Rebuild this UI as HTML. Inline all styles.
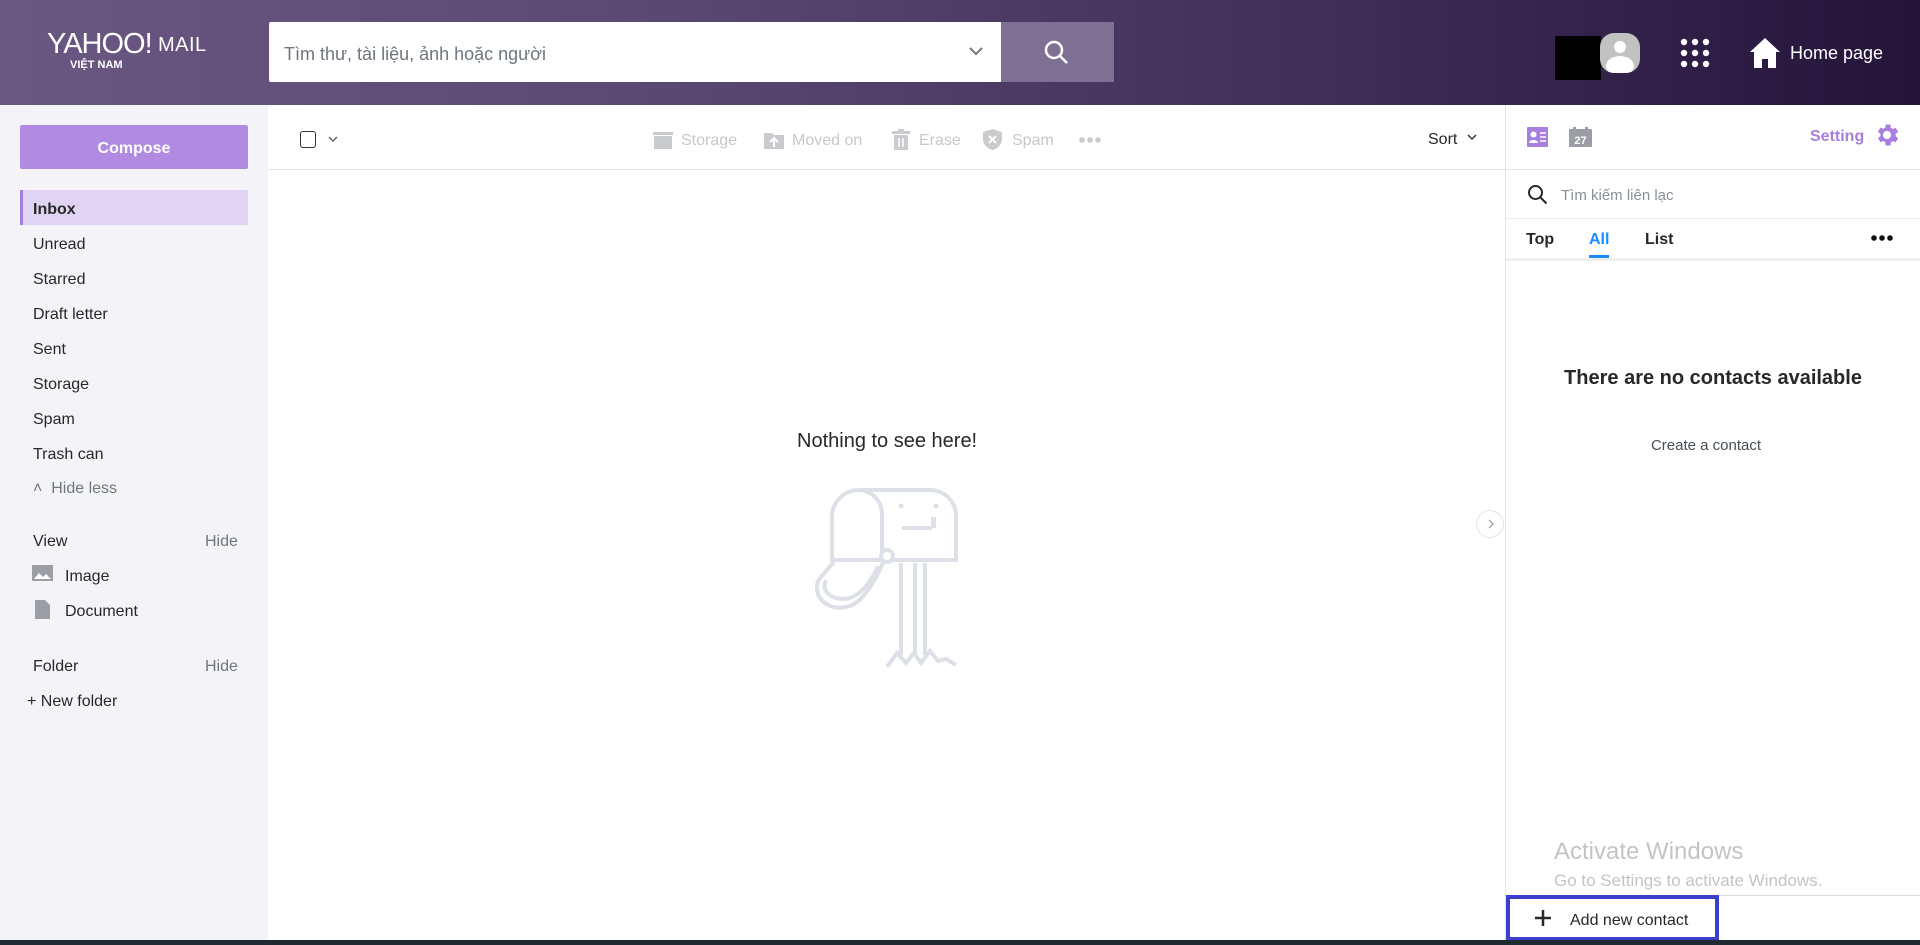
<!DOCTYPE html>
<html><head><meta charset="utf-8"><style>
*{margin:0;padding:0;box-sizing:border-box}
body{width:1920px;height:945px;overflow:hidden;font-family:"Liberation Sans","DejaVu Sans",sans-serif;color:#26282a;background:#fff;position:relative}
.a{position:absolute}
#hdr{left:0;top:0;width:1920px;height:105px;background:linear-gradient(90deg,#6a5882 0%,#5a4872 35%,#3f2d58 70%,#24143a 100%)}
#side{left:0;top:105px;width:268px;height:835px;background:#f4f4f8}
.nav{position:absolute;left:33px;font-size:16px;color:#26282a}
.tb{position:absolute;top:132px;font-size:16px;color:#c6c8cc}
</style></head><body>
<div id="hdr" class="a"></div>
<div class="a" style="left:47px;top:28px;color:#fff;font-size:29px;letter-spacing:-1px;font-weight:300">YAHOO!</div>
<div class="a" style="left:158px;top:34px;color:#fff;font-size:20px;letter-spacing:.5px">MAIL</div>
<div class="a" style="left:70px;top:59px;color:#fff;font-size:11px;font-weight:bold">VIỆT NAM</div>
<div class="a" style="left:269px;top:22px;width:733px;height:60px;background:#fff;border-radius:2px 0 0 2px"></div>
<div class="a" style="left:284px;top:44px;font-size:18px;color:#6e7680">Tìm thư, tài liệu, ảnh hoặc người</div>
<svg class="a" style="left:967px;top:44px" width="18" height="14"><path d="M3 4l6 6 6-6" stroke="#777" stroke-width="2" fill="none"/></svg>
<div class="a" style="left:1001px;top:22px;width:113px;height:60px;background:#7e7093"></div>
<svg class="a" style="left:1043px;top:39px" width="28" height="28"><circle cx="11" cy="11" r="8" stroke="#fff" stroke-width="2.5" fill="none"/><path d="M17 17l7 7" stroke="#fff" stroke-width="2.5"/></svg>
<div class="a" style="left:1555px;top:36px;width:46px;height:44px;background:#000"></div>
<div class="a" style="left:1600px;top:33px;width:40px;height:40px;border-radius:14px;background:#c2c2c2;overflow:hidden"><div class="a" style="left:14px;top:8px;width:12px;height:12px;border-radius:50%;background:#fff"></div><div class="a" style="left:6px;top:23px;width:28px;height:20px;border-radius:50%;background:#fff"></div></div>
<svg class="a" style="left:1680px;top:38px" width="32" height="32"><g fill="#fff"><circle cx="4" cy="4" r="3.2"/><circle cx="15" cy="4" r="3.2"/><circle cx="26" cy="4" r="3.2"/><circle cx="4" cy="15" r="3.2"/><circle cx="15" cy="15" r="3.2"/><circle cx="26" cy="15" r="3.2"/><circle cx="4" cy="26" r="3.2"/><circle cx="26" cy="26" r="3.2"/><circle cx="15" cy="26" r="3.2"/></g></svg>
<svg class="a" style="left:1749px;top:37px" width="32" height="32"><path d="M16 1L1 15h4v16h8v-9h6v9h8V15h4z" fill="#fff"/></svg>
<div class="a" style="left:1790px;top:43px;font-size:18px;color:#fff">Home page</div>

<div id="side" class="a"></div>
<div class="a" style="left:20px;top:125px;width:228px;height:44px;background:#b18be2;border-radius:2px;color:#fff;font-weight:bold;font-size:16px;text-align:center;line-height:48px">Compose</div>
<div class="a" style="left:20px;top:190px;width:228px;height:35px;background:#e1d4f3;border-left:3px solid #a57fdc"></div>
<div class="nav" style="top:201px;font-weight:bold">Inbox</div>
<div class="nav" style="top:236px">Unread</div>
<div class="nav" style="top:271px">Starred</div>
<div class="nav" style="top:306px">Draft letter</div>
<div class="nav" style="top:341px">Sent</div>
<div class="nav" style="top:376px">Storage</div>
<div class="nav" style="top:411px">Spam</div>
<div class="nav" style="top:446px">Trash can</div>
<div class="nav" style="top:480px;color:#6e7680;left:33px">˄&nbsp;&nbsp;Hide less</div>
<div class="nav" style="top:533px">View</div><div class="nav" style="top:533px;left:205px;color:#6e7680">Hide</div>
<svg class="a" style="left:32px;top:565px" width="21" height="16"><rect width="21" height="16" fill="#9c9ea6"/><path d="M2 14l5-6 4 4 3-3 5 5z" fill="#fff"/></svg>
<div class="nav" style="top:568px;left:65px">Image</div>
<svg class="a" style="left:35px;top:600px" width="15" height="19"><path d="M0 0h10l5 5v14H0z" fill="#9c9ea6"/></svg>
<div class="nav" style="top:603px;left:65px">Document</div>
<div class="nav" style="top:658px">Folder</div><div class="nav" style="top:658px;left:205px;color:#6e7680">Hide</div>
<div class="nav" style="top:693px;left:27px">+ New folder</div>

<div class="a" style="left:268px;top:169px;width:1237px;height:1px;background:#e4e4e8"></div>
<div class="a" style="left:300px;top:131px;width:16px;height:17px;border:1.5px solid #333;border-radius:3px"></div>
<svg class="a" style="left:327px;top:134px" width="12" height="10"><path d="M2 3l4 4 4-4" stroke="#666" stroke-width="1.5" fill="none"/></svg>
<svg class="a" style="left:653px;top:130px" width="20" height="20"><rect x="0" y="2" width="20" height="3" fill="#c9cbcf"/><rect x="1" y="6" width="18" height="13" fill="#c9cbcf"/></svg>
<div class="tb" style="left:681px">Storage</div>
<svg class="a" style="left:764px;top:130px" width="20" height="20"><path d="M0 3h8l2 2h10v14H0z" fill="#c9cbcf"/><path d="M10 17V9M6 12l4-4 4 4" stroke="#fff" stroke-width="2" fill="none"/></svg>
<div class="tb" style="left:792px">Moved on</div>
<svg class="a" style="left:892px;top:129px" width="18" height="21"><rect x="0" y="2" width="18" height="3" fill="#c9cbcf"/><rect x="6" y="0" width="6" height="2" fill="#c9cbcf"/><rect x="2" y="6" width="14" height="15" fill="#c9cbcf"/><path d="M7 9v9M11 9v9" stroke="#fff" stroke-width="1.5"/></svg>
<div class="tb" style="left:919px">Erase</div>
<svg class="a" style="left:983px;top:129px" width="19" height="21"><path d="M9.5 0L19 3v7c0 6-5 10-9.5 11C5 20 0 16 0 10V3z" fill="#c9cbcf"/><path d="M6 7l7 7M13 7l-7 7" stroke="#fff" stroke-width="2"/></svg>
<div class="tb" style="left:1012px">Spam</div>
<svg class="a" style="left:1078px;top:136px" width="24" height="8"><g fill="#c9cbcf"><circle cx="4" cy="4" r="2.8"/><circle cx="12" cy="4" r="2.8"/><circle cx="20" cy="4" r="2.8"/></g></svg>
<div class="a" style="left:1428px;top:131px;font-size:16px">Sort</div>
<svg class="a" style="left:1466px;top:132px" width="12" height="10"><path d="M2 3l4 4 4-4" stroke="#333" stroke-width="1.5" fill="none"/></svg>

<div class="a" style="left:797px;top:430px;font-size:20px;color:#26282a">Nothing to see here!</div>
<svg class="a" style="left:760px;top:420px" width="300" height="260" fill="none" stroke="#dde0e6" stroke-width="4">
<path d="M72 140V97a27 27 0 0 1 27-27H170a26 26 0 0 1 26 26V140H72z"/>
<path d="M99 70a24 24 0 0 1 23 24V136"/>
<path d="M142 108H172"/><rect x="171" y="97" width="5" height="11" fill="#dde0e6" stroke="none"/>
<circle cx="141" cy="86" r="2.5" fill="#dde0e6" stroke="none"/><circle cx="176" cy="86" r="2.5" fill="#dde0e6" stroke="none"/>
<circle cx="127" cy="136" r="6" fill="#fff"/>
<path d="M74 142L60 158c-10 14 5 36 30 28 14-5 28-30 34-46"/>
<path d="M66 160c-6 12 8 22 24 18 12-4 22-18 28-32"/>
<path d="M141 143V235M155 143V235M165 143V235"/>
<path d="M127 247L137 233L146 243L154 233L161 243L170 231L178 241L186 239L196 245"/>
</svg>

<div class="a" style="left:1505px;top:105px;width:1px;height:835px;background:#e4e4e8"></div>
<svg class="a" style="left:1527px;top:127px" width="21" height="20"><rect width="21" height="20" rx="1" fill="#a77fde"/><circle cx="6.5" cy="7.5" r="3" fill="#fff"/><path d="M2 16c0-4 9-4 9 0z" fill="#fff"/><path d="M13 6h6M13 10h6M13 14h6" stroke="#fff" stroke-width="1.6"/></svg>
<svg class="a" style="left:1569px;top:127px" width="23" height="20"><rect y="2" width="23" height="18" rx="1" fill="#9c9ea6"/><rect x="4" y="0" width="3" height="4" fill="#9c9ea6"/><rect x="16" y="0" width="3" height="4" fill="#9c9ea6"/><text x="11.5" y="17" text-anchor="middle" font-size="11" font-weight="bold" fill="#fff" font-family="Liberation Sans">27</text></svg>
<div class="a" style="left:1810px;top:128px;font-size:16px;font-weight:bold;color:#a77fde">Setting</div>
<svg class="a" style="left:1873px;top:121px" width="28" height="28" viewBox="0 0 24 24"><path fill="#a77fde" d="M19.4 13a7.7 7.7 0 0 0 0-2l2.1-1.6-2-3.5-2.5 1a7.5 7.5 0 0 0-1.7-1L14.9 3h-4l-.4 2.7a7.5 7.5 0 0 0-1.7 1l-2.5-1-2 3.5L6.4 11a7.7 7.7 0 0 0 0 2l-2.1 1.6 2 3.5 2.5-1a7.5 7.5 0 0 0 1.7 1l.4 2.9h4l.4-2.7a7.5 7.5 0 0 0 1.7-1l2.5 1 2-3.5zM12 15.5a3.5 3.5 0 1 1 0-7 3.5 3.5 0 0 1 0 7z"/></svg>
<div class="a" style="left:1506px;top:169px;width:414px;height:1px;background:#e4e4e8"></div>
<svg class="a" style="left:1527px;top:184px" width="22" height="22"><circle cx="8.5" cy="8.5" r="6.5" stroke="#26282a" stroke-width="2" fill="none"/><path d="M13.5 13.5l6 6" stroke="#26282a" stroke-width="2"/></svg>
<div class="a" style="left:1561px;top:187px;font-size:15px;color:#8a9099">Tìm kiếm liên lạc</div>
<div class="a" style="left:1506px;top:218px;width:414px;height:1px;background:#ececf0"></div>
<div class="a" style="left:1526px;top:231px;font-size:16px;font-weight:bold">Top</div>
<div class="a" style="left:1589px;top:231px;font-size:16px;font-weight:bold;color:#1a8cff">All</div>
<div class="a" style="left:1589px;top:255px;width:20px;height:3px;background:#1a8cff"></div>
<div class="a" style="left:1645px;top:231px;font-size:16px;font-weight:bold">List</div>
<svg class="a" style="left:1870px;top:234px" width="24" height="8"><g fill="#111"><circle cx="4" cy="4" r="2.8"/><circle cx="12" cy="4" r="2.8"/><circle cx="20" cy="4" r="2.8"/></g></svg>
<div class="a" style="left:1506px;top:258px;width:414px;height:3px;background:#efeff3"></div>
<div class="a" style="left:1506px;top:367px;width:414px;text-align:center;font-size:20px;font-weight:bold">There are no contacts available</div>
<div class="a" style="left:1506px;top:437px;width:400px;text-align:center;font-size:15px;color:#464e56">Create a contact</div>
<div class="a" style="left:1476px;top:510px;width:28px;height:28px;border-radius:50%;border:1px solid #e4e4e8;background:#fff"></div>
<svg class="a" style="left:1486px;top:518px" width="10" height="12"><path d="M3 2l4 4-4 4" stroke="#aaa" stroke-width="1.5" fill="none"/></svg>
<div class="a" style="left:1554px;top:838px;font-size:24px;color:#c4c4c4">Activate Windows</div>
<div class="a" style="left:1554px;top:871px;font-size:17px;color:#c4c4c4">Go to Settings to activate Windows.</div>
<div class="a" style="left:1506px;top:895px;width:414px;height:1px;background:#dcdce0"></div>
<div class="a" style="left:1506px;top:895px;width:213px;height:46px;border:4px solid #3c3fcc;background:#fff"></div>
<svg class="a" style="left:1534px;top:909px" width="18" height="18"><path d="M9 1v16M1 9h16" stroke="#26282a" stroke-width="2.5"/></svg>
<div class="a" style="left:1570px;top:912px;font-size:16px">Add new contact</div>
<div class="a" style="left:0;top:940px;width:1920px;height:5px;background:#1f2b30"></div>
</body></html>
